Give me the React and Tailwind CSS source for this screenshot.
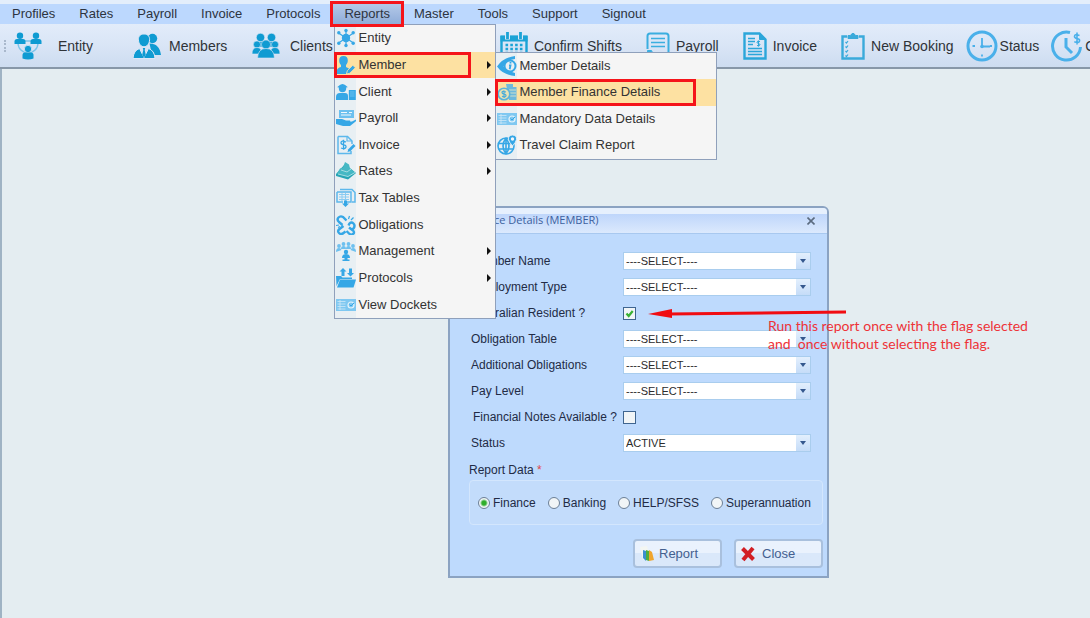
import { useState } from 'react';
import clsx from 'clsx';

/* ---------- Toolbar icons ---------- */

const EntityIcon = () => (
  <svg className="h-7 w-7 shrink-0" viewBox="0 0 28 28" fill="#0f9bd2">
    <path d="M4 11a10 10 0 0 0 20 0M7 9h14" fill="none" stroke="#7cc4ea" strokeWidth="1.400" />
    <circle cx="6" cy="3.800" r="3.200" />
    <path d="M.5 12V9.500Q.5 7 3 7h6q2.500 0 2.500 2.500V12z" />
    <circle cx="22" cy="3.800" r="3.200" />
    <path d="M16.500 12V9.500q0-2.500 2.500-2.500h6q2.500 0 2.500 2.500V12z" />
    <circle cx="14" cy="17" r="3.700" stroke="#dce8f7" strokeWidth=".8" />
    <path d="M8.500 26.500V23q0-2.500 2.500-2.500h6q2.500 0 2.500 2.500v3.500q-5.500 2-11 0z" />
  </svg>
);

const MembersIcon = () => (
  <svg className="h-7 w-7 shrink-0" viewBox="0 0 28 28" fill="#0f9bd2">
    <circle cx="19.500" cy="6.500" r="4.700" />
    <path d="M16.500 11.500q10 0 11.500 11.500h-9z" />
    <g stroke="#dce8f7" strokeWidth="1">
      <path d="M11 2c3.700 0 5.800 2.500 5.600 5.800-.2 3.700-2.500 7-5.600 7s-5.400-3.300-5.600-7C5.200 4.500 7.300 2 11 2z" />
      <path d="M0 26.500q.5-8 6.500-10l4.500 9 4.500-9q6 2 6.500 10z" />
    </g>
    <path d="M9.800 16h2.400l-.5 2 1.100 5-1.800 2.500L9.200 23l1.100-5z" />
  </svg>
);

const ClientsIcon = () => (
  <svg className="h-7 w-7 shrink-0" viewBox="0 0 28 28" fill="#0f9bd2" stroke="#dce8f7" strokeWidth=".6">
    <circle cx="8.500" cy="5.500" r="4.200" />
    <circle cx="19.500" cy="5.500" r="4.200" />
    <path d="M3 15q0-5.500 5.500-5.500T14 15zM14 15q0-5.500 5.500-5.500T25 15z" />
    <circle cx="5" cy="12.500" r="3.600" />
    <circle cx="23" cy="12.500" r="3.600" />
    <path d="M0 22q0-6.500 5-6.500t5 6.500zM18 22q0-6.500 5-6.500t5 6.500z" />
    <circle cx="14" cy="12.500" r="4.500" />
    <path d="M5.500 26q.5-9.500 8.500-9.500t8.500 9.500z" />
  </svg>
);

const CalendarIcon = () => (
  <svg className="h-7 w-7 shrink-0" viewBox="0 0 28 28" fill="none" stroke="#1ba3d6">
    <path d="M1.500 5h25v22h-25z" strokeWidth="2.400" />
    <path d="M.5 6.500h27" strokeWidth="6" />
    <path d="M7.500 0v7.500M20.500 0v7.500" stroke="#dce8f7" strokeWidth="5" />
    <path d="M7.500 0v7M20.500 0v7" strokeWidth="2.800" />
    <path d="M5.500 13h17M5.500 17h17M5.500 21h17M5.500 25h17" strokeWidth="2.600" strokeDasharray="2.600 2.200" />
  </svg>
);

const PayslipIcon = () => (
  <svg className="h-7 w-6 shrink-0" viewBox="0 0 24 28" fill="none" stroke="#3aaee0" strokeWidth="2">
    <path d="M1.500 17V4q0-2.500 2.500-2.500h16q2.500 0 2.500 2.500v17q0 2-2 2h-3" />
    <path d="M5 6.500h14M5 10.500h14M5 14.500h14" strokeWidth="1.600" />
    <path d="M1.500 18.500h4q.5 3 3.500 3h6v3.500H5q-3.500 0-3.500-6.500z" fill="#3aaee0" strokeWidth="1" />
  </svg>
);

const InvoiceIcon = () => (
  <svg className="h-7 w-6 shrink-0" viewBox="0 0 24 28" fill="none" stroke="#2ba6da" strokeWidth="2.400">
    <path d="M1.500 1.500h15l6 6v19h-21z" />
    <path d="M16.500 1.500v6h6z" fill="#2ba6da" strokeWidth="1" />
    <path d="M5 6.500h7M5 9.500h7M5 12.500h5M5 16.500h14M5 19.500h14M5 22.500h14" strokeWidth="1.400" />
    <path d="M17 9.500q-3-1-3 .7 0 1.100 1.500 1.300 1.600.3 1.500 1.400-.2 1.500-3 .6M15.500 8.500v6" strokeWidth="1" />
  </svg>
);

const BookingIcon = () => (
  <svg className="h-7 w-6 shrink-0" viewBox="0 0 24 28" fill="none" stroke="#3aaadb" strokeWidth="2.400">
    <path d="M6 4.500H1.500v22h21v-22H18" />
    <path d="M7 6.500V3.500h2.500Q12-.8 14.500 3.500H17v3z" fill="#3aaadb" strokeWidth="1" />
    <path d="M4.500 10l1 1 1.500-2M4.500 14.500l1 1 1.500-2M4.500 19l1 1 1.500-2M4.500 23.500l1 1 1.500-2" strokeWidth="1.200" />
  </svg>
);

const StatusIcon = () => (
  <svg className="h-8 w-8 shrink-0" viewBox="0 0 32 32" fill="none" stroke="#4ab0ea" strokeWidth="3">
    <circle cx="16" cy="16" r="14" />
    <path d="M16 8v8.500h8" strokeWidth="1.800" />
    <circle cx="16" cy="16.500" r="1.800" fill="#4ab0ea" stroke="none" />
    <path d="M6.500 16H9M16 24.500v2M24 16h2" strokeWidth="1.800" />
  </svg>
);

const OvertimeIcon = () => (
  <svg className="h-8 w-8 shrink-0" viewBox="0 0 32 32" fill="none" stroke="#4ab0ea" strokeWidth="3">
    <path d="M19 2.500A14 14 0 1 0 29.500 17" />
    <path d="M15 8v9l6 6" />
    <path d="M28.500 5.500q-5-2-5 1 0 1.600 2.600 2 2.700.4 2.500 2.300-.4 2.700-5.300 1M26 2.500v12" strokeWidth="1.600" />
  </svg>
);

/* ---------- Menu icons ---------- */

const MenuSvg = ({ children }) => (
  <svg className="h-5 w-5 shrink-0" viewBox="0 0 20 20" fill="#35a7e6" stroke="none">
    {children}
  </svg>
);

const menuIcons = {
  entity: (
    <MenuSvg>
      <circle cx="10" cy="10" r="4.200" />
      <path d="M10 2v16M2.500 5l15 10M2.500 15l15-10" stroke="#35a7e6" strokeWidth="1.200" />
      <circle cx="10" cy="2.500" r="1.700" />
      <circle cx="10" cy="17.500" r="1.700" />
      <circle cx="2.800" cy="4.800" r="1.700" />
      <circle cx="17.200" cy="4.800" r="1.700" />
      <circle cx="2.800" cy="15.200" r="1.700" />
      <circle cx="17.200" cy="15.200" r="1.700" />
    </MenuSvg>
  ),
  member: (
    <MenuSvg>
      <path d="M7.500 1c3 0 4.500 2 4.300 4.700-.1 2-1 3.300-1.800 4.300v2l3 1.500-3 5.500H1v-3.500q0-2.500 4-3.500v-2C4 9 3.300 7.700 3.200 5.700 3 3 4.500 1 7.500 1z" />
      <path d="M10.500 19l.8-3.300 5.500-5.500 2.500 2.500-5.500 5.500z" stroke="#fde3a4" strokeWidth=".8" />
    </MenuSvg>
  ),
  client: (
    <MenuSvg>
      <path d="M2 4.500q4.500-5 9 0l.5 1h-10z" />
      <circle cx="6.500" cy="6.500" r="3.700" />
      <path d="M0 18v-3q0-4 4-4h5q3 0 3 3v4zM12.800 8h7v10h-7z" />
      <path d="M14 10h4.500M14 12h4.500M14 14h4.500" stroke="#79c6f1" strokeWidth=".8" />
    </MenuSvg>
  ),
  payroll: (
    <MenuSvg>
      <path d="M3 2h15v8H3z" fill="#6dc0ef" />
      <path d="M5 4.500h6M5 7h10M13 4.500h3" stroke="#f2f8fc" strokeWidth="1" />
      <path d="M0 11h6l4 1.500h4q1 1.800-1 1.800H9l7-.8 4-2q.5 1.500-1 2.500l-5 4H7l-7-2z" />
    </MenuSvg>
  ),
  invoice: (
    <MenuSvg>
      <path d="M2 1.500h9.500L16 6v3M2 1.500v17h13V16" fill="none" stroke="#5cb8ec" strokeWidth="1.500" />
      <path d="M11 1.500V6h5" fill="none" stroke="#5cb8ec" strokeWidth="1.200" />
      <path d="M10 7Q5 5 5 7.800q0 1.600 2.500 2 2.800.4 2.500 2.200Q9.500 14.500 5 13M7.500 4.800v10" fill="none" stroke="#35a7e6" strokeWidth="1.300" />
      <path d="M11.500 17l.8-2.800L17.500 9l2 2-5.200 5.200z" />
    </MenuSvg>
  ),
  rates: (
    <MenuSvg>
      <path d="M0 13L9 3l11 9-8 6.500L0 15z" fill="#27a5b5" />
      <path d="M9 1l4 2.500 1 4 5 4-7 4-11-3 3-5 3-1z" fill="#45b8c4" />
      <path d="M2 13l10 2.500 7-4M5 9l6 2 4-3" fill="none" stroke="#a5dde2" strokeWidth="1" />
    </MenuSvg>
  ),
  tax: (
    <MenuSvg>
      <path d="M4 1.500h12l3 3V14h-3M1 4h14v10h-4M1 4v10h6" fill="none" stroke="#5cb8ec" strokeWidth="1.500" />
      <path d="M3 6.500h10M3 9h10M3 11.500h10M6 5v8M9.500 5v8" fill="none" stroke="#8accf2" strokeWidth="1" />
      <path d="M8 12.500h3v3h2L9.500 19 6 15.500h2z" />
    </MenuSvg>
  ),
  obligations: (
    <MenuSvg>
      <path
        d="M6.500 10L3 7Q.5 4.500 2.500 2.500T7 2l3.500 3.500M12.500 10.500l1-2q2-2 4 0t0 5l-1.500 1M13 12.500l4 3q2 2 0 3.500t-4-.5L10.500 16M7.500 11l-4 3q-2.500 2-.5 4t4.500 0l2-1.500"
        fill="none"
        stroke="#35a7e6"
        strokeWidth="2.400"
      />
      <path d="M13.500 1l-1 3M17.500 2.500L15 5M0 10.500l3-.5M2 12.500l2-1" stroke="#35a7e6" strokeWidth="1.200" />
    </MenuSvg>
  ),
  management: (
    <MenuSvg>
      <g fill="#6dc0ef">
        <circle cx="3" cy="5" r="1.900" />
        <circle cx="7.500" cy="3" r="1.900" />
        <circle cx="12.500" cy="3" r="1.900" />
        <circle cx="17" cy="5" r="1.900" />
        <path d="M0 11q0-4 3-4 2 0 2.500 2zM5 8q0-3 2.500-3T10 8zM10 8q0-3 2.500-3T15 8zM14.500 9q.5-2 2.500-2 3 0 3 4z" />
      </g>
      <circle cx="10" cy="11" r="2.200" />
      <path d="M6 17q0-4 4-4t4 4zM8.500 16h3v2.500h2V20h-7v-1.500h2z" />
    </MenuSvg>
  ),
  protocols: (
    <MenuSvg>
      <path d="M0 8h5l1.500 1.500H16V11H4L.5 18z" />
      <path d="M4 11.500h16L17.500 19.500H1z" />
      <path d="M7 0l3.500 3.500H8.500V8h-3V3.500h-2zM14.500 8.500L11 5h2V.5h3V5h2z" />
    </MenuSvg>
  ),
  dockets: (
    <MenuSvg>
      <path d="M0 4h20v12H0z" fill="#7fc8f1" />
      <path d="M1.500 6.500h8M1.500 9h8M1.500 11.500h8M1.500 14h8M4 5v10" stroke="#cfe9f8" strokeWidth=".8" />
      <circle cx="15" cy="10" r="3" fill="none" stroke="#e4f3fb" strokeWidth="1.200" />
      <path d="M13.500 9.500l1.500 1.500 3-3" fill="none" stroke="#35a7e6" strokeWidth="1" />
    </MenuSvg>
  ),
  details: (
    <MenuSvg>
      <path d="M0 10.500Q6 1.500 18 0v3Q10 4 6.500 10.500 10 15 18 17v3Q6 19 0 10.500z" />
      <circle cx="13" cy="10" r="5.500" fill="none" stroke="#35a7e6" strokeWidth="2" />
      <path d="M13.500 6v1.500M12 9.300h1.500l-.8 4" fill="none" stroke="#35a7e6" strokeWidth="1.800" />
    </MenuSvg>
  ),
  finance: (
    <MenuSvg>
      <path d="M9 2h7v3h3.500v13H12z" fill="#6db9dd" />
      <path d="M12 8h7M13 11h6M13 14h6" stroke="#d9e5c8" strokeWidth=".9" />
      <circle cx="7" cy="12" r="5.800" fill="#e8e2b4" stroke="#5bb3d9" strokeWidth="1.600" />
      <path d="M9 10Q5 8.500 5 10.600q0 1.300 2 1.500 2.200.3 2 1.700Q8.500 15.500 5 14.400M7 8.500v7.500" fill="none" stroke="#4bacd8" strokeWidth="1.200" />
    </MenuSvg>
  ),
  travel: (
    <MenuSvg>
      <g fill="none" stroke="#35a7e6" strokeWidth="1.600">
        <circle cx="9" cy="11" r="8" />
        <path d="M9 3v16M1.500 8.500H14M1.500 14h15M9 3Q3 11 9 19M9 3q6 8 0 16" />
      </g>
      <path d="M15.500 0Q20 .3 19.500 4.500 19 7 15.500 11 12 7 11.500 4.500 11 .3 15.500 0z" stroke="#f4f6f8" strokeWidth=".8" />
      <circle cx="15.500" cy="4" r="1.700" fill="#f4f6f8" />
    </MenuSvg>
  ),
};

/* ---------- Data ---------- */

const menuBar = ['Profiles', 'Rates', 'Payroll', 'Invoice', 'Protocols', 'Reports', 'Master', 'Tools', 'Support', 'Signout'];

const reportItems = [
  { label: 'Entity', icon: 'entity' },
  { label: 'Member', icon: 'member', sub: true },
  { label: 'Client', icon: 'client', sub: true },
  { label: 'Payroll', icon: 'payroll', sub: true },
  { label: 'Invoice', icon: 'invoice', sub: true },
  { label: 'Rates', icon: 'rates', sub: true },
  { label: 'Tax Tables', icon: 'tax' },
  { label: 'Obligations', icon: 'obligations' },
  { label: 'Management', icon: 'management', sub: true },
  { label: 'Protocols', icon: 'protocols', sub: true },
  { label: 'View Dockets', icon: 'dockets' },
];

const memberItems = [
  { label: 'Member Details', icon: 'details' },
  { label: 'Member Finance Details', icon: 'finance' },
  { label: 'Mandatory Data Details', icon: 'dockets' },
  { label: 'Travel Claim Report', icon: 'travel' },
];

const recordTools = [
  { label: 'Entity', Icon: EntityIcon, gap: 'gap-4' },
  { label: 'Members', Icon: MembersIcon, gap: 'gap-2' },
  { label: 'Clients', Icon: ClientsIcon, gap: 'gap-2.5' },
];

const shiftTools = [
  { label: 'Confirm Shifts', Icon: CalendarIcon, space: 'mr-6' },
  { label: 'Payroll', Icon: PayslipIcon, space: 'mr-6' },
  { label: 'Invoice', Icon: InvoiceIcon, space: 'mr-6' },
  { label: 'New Booking', Icon: BookingIcon, space: 'mr-3' },
];

const clockTools = [
  { label: 'Status', Icon: StatusIcon },
  { label: 'C', Icon: OvertimeIcon },
];

const fields = [
  { id: 'memberName', label: 'Member Name', type: 'select', value: '----SELECT----' },
  { id: 'employmentType', label: 'Employment Type', type: 'select', value: '----SELECT----' },
  { id: 'resident', label: 'Australian Resident ?', type: 'check' },
  { id: 'obligationTable', label: 'Obligation Table', type: 'select', value: '----SELECT----' },
  { id: 'additional', label: 'Additional Obligations', type: 'select', value: '----SELECT----' },
  { id: 'payLevel', label: 'Pay Level', type: 'select', value: '----SELECT----' },
  { id: 'notes', label: 'Financial Notes Available ?', type: 'check' },
  { id: 'status', label: 'Status', type: 'select', value: 'ACTIVE' },
];

const reportTypes = ['Finance', 'Banking', 'HELP/SFSS', 'Superannuation'];

/* ---------- Components ---------- */

const MenuRow = ({ item, active, children }) => (
  <li className="relative flex">
    <button
      type="button"
      className={clsx(
        'flex flex-1 items-center gap-0.5 pl-px text-left text-[13px] leading-4 text-[#333]',
        active && 'bg-[#fde1a2]'
      )}
    >
      {menuIcons[item.icon]}
      <span className="flex-1 whitespace-nowrap">{item.label}</span>
      {item.sub && (
        <svg className="mr-1 h-2 w-1" viewBox="0 0 4 8">
          <path d="M0 0l4 4-4 4z" fill="#111" />
        </svg>
      )}
    </button>
    {children}
  </li>
);

const menuPanel =
  'absolute border border-[#8fa0bb] bg-[linear-gradient(to_right,#e8eff3_21px,#f5f5f5_21px)]';

const ReportsMenu = () => (
  <ul className={clsx(menuPanel, 'left-0.5 top-full grid h-[295px] w-[162px] auto-rows-fr')}>
    {reportItems.map((item) => (
      <MenuRow key={item.label} item={item} active={item.label === 'Member'}>
        {item.label === 'Member' && (
          <>
            <span className="pointer-events-none absolute inset-y-0 -left-px right-6 border-[3px] border-[#f5141a]" />
            <MemberMenu />
          </>
        )}
      </MenuRow>
    ))}
  </ul>
);

const MemberMenu = () => (
  <ul className={clsx(menuPanel, 'left-full top-0 z-10 grid h-[108px] w-[222px] auto-rows-fr')}>
    {memberItems.map((item) => (
      <MenuRow key={item.label} item={item} active={item.icon === 'finance'}>
        {item.icon === 'finance' && (
          <span className="pointer-events-none absolute inset-y-0 -left-px right-5 border-[3px] border-[#f5141a]" />
        )}
      </MenuRow>
    ))}
  </ul>
);

const MenuBar = () => (
  <nav className="relative z-20 flex border-t-4 border-[#e3eefb] bg-[#bcd8fe] text-[13px] leading-5 text-[#2d3440]">
    {menuBar.map((name) => (
      <div key={name} className="relative">
        <button
          type="button"
          className={clsx(
            'h-5 px-3',
            name === 'Reports' && 'bg-linear-to-b from-[#b4c9e8] to-[#8facd8]'
          )}
        >
          {name}
        </button>
        {name === 'Reports' && (
          <>
            <ReportsMenu />
            <span className="pointer-events-none absolute -inset-x-0.5 -inset-y-[3px] border-[3px] border-[#f5141a]" />
          </>
        )}
      </div>
    ))}
  </nav>
);

const Toolbar = () => (
  <div className="flex h-[45px] items-center overflow-hidden border-b-2 border-[#8797a8] bg-linear-to-b from-[#e2ecfa] via-[#d9e5f6] to-[#cddcf0] pl-1 text-sm text-[#2f3338]">
    <span className="mr-2 h-3 border-l-2 border-dotted border-[#a9b8cc]" />
    <div className="flex w-[486px] shrink-0">
      {recordTools.map(({ label, Icon, gap }) => (
        <button key={label} type="button" className={clsx('flex w-[119px] shrink-0 items-center', gap)}>
          <Icon />
          {label}
        </button>
      ))}
    </div>
    {shiftTools.map(({ label, Icon, space }) => (
      <button key={label} type="button" className={clsx('flex shrink-0 items-center gap-1.5 whitespace-nowrap', space)}>
        <Icon />
        {label}
      </button>
    ))}
    {clockTools.map(({ label, Icon }) => (
      <button key={label} type="button" className="mr-3 flex shrink-0 items-center gap-0.5">
        <Icon />
        {label}
      </button>
    ))}
  </div>
);

const SelectBox = ({ id, value }) => (
  <div className="relative flex-1">
    <select
      id={id}
      className="block h-[18px] w-full appearance-none border border-[#a9cdee] bg-white pl-0.5 text-[11px] leading-4 text-[#2b2b2b]"
    >
      <option>{value}</option>
    </select>
    <span className="pointer-events-none absolute inset-y-px right-px flex w-3.5 items-center justify-center bg-linear-to-b from-[#e3effd] to-[#c5dcf8]">
      <svg className="h-1 w-1.5" viewBox="0 0 6 4">
        <path d="M0 0h6L3 4z" fill="#35588e" />
      </svg>
    </span>
  </div>
);

const CheckBox = ({ id, checked, onChange }) => (
  <span className="relative flex">
    <input
      id={id}
      type="checkbox"
      checked={checked}
      onChange={onChange}
      className="h-[13px] w-[13px] appearance-none border border-[#3f6590] bg-[#f1f5f7]"
    />
    {checked && (
      <svg className="pointer-events-none absolute inset-0 h-[13px] w-[13px]" viewBox="0 0 13 13">
        <path d="M3.500 6.500l2.200 2.500 4-5" fill="none" stroke="#3bb133" strokeWidth="2.200" />
      </svg>
    )}
  </span>
);

const dialogButton =
  'flex h-[29px] w-[89px] items-center rounded-sm border-2 border-[#a9c0dd] bg-linear-to-b from-[#eaf2fd] from-50% to-[#dae8fa] to-50% pl-1';

const FinanceDialog = () => {
  const [checks, setChecks] = useState({ resident: true, notes: false });
  const [reportType, setReportType] = useState('Finance');

  const toggle = (id) => setChecks({ ...checks, [id]: !checks[id] });

  return (
    <section className="absolute left-[448px] top-[137px] w-[381px] rounded-t-md border-2 border-[#8ba3c2] bg-[#bedafd]">
      <header className="flex h-[26px] items-center justify-between rounded-t border-b border-[#a8c8ef] bg-[linear-gradient(to_bottom,#e6f0fd_6px,#bfd6fb_6px,#dbe9fd)] pl-4 pr-3">
        <h2 className="font-['Open_Sans',sans-serif] text-[11px] text-[#3c5f9e]">Finance Details (MEMBER)</h2>
        <button type="button" aria-label="Close window">
          <svg className="h-2 w-2" viewBox="0 0 8 8">
            <path d="M.5.5l7 7M7.500.5l-7 7" stroke="#5b6b80" strokeWidth="1.600" />
          </svg>
        </button>
      </header>

      <form className="pb-2 pl-[21px] pr-1 pt-3.5 text-xs text-[#222b45]" onSubmit={(e) => e.preventDefault()}>
        <div className="pr-3">
          {fields.map((field) => (
            <div key={field.id} className="flex h-[26px] items-center">
              <label
                htmlFor={field.id}
                className={clsx('w-[152px] shrink-0 whitespace-nowrap', field.id === 'notes' && 'pl-0.5')}
              >
                {field.label}
              </label>
              {field.type === 'select' ? (
                <SelectBox id={field.id} value={field.value} />
              ) : (
                <CheckBox id={field.id} checked={checks[field.id]} onChange={() => toggle(field.id)} />
              )}
            </div>
          ))}
        </div>

        <fieldset className="-ml-0.5 mt-1">
          <legend className="leading-5">
            Report Data <span className="text-[#e0474c]">*</span>
          </legend>
          <div className="flex h-[45px] items-center gap-3 rounded-sm border border-[#d3e6fd] bg-[#c3dcfb] pl-2">
            {reportTypes.map((type) => (
              <label key={type} className="flex items-center gap-[3px]">
                <input
                  type="radio"
                  name="reportType"
                  checked={reportType === type}
                  onChange={() => setReportType(type)}
                  className="h-3 w-3 appearance-none rounded-full border border-[#6b7f96] bg-[#f1f5f7] checked:bg-[radial-gradient(circle,#2fae2b_2px,#f1f5f7_4px)]"
                />
                {type}
              </label>
            ))}
          </div>
        </fieldset>

        <div className="mt-3.5 flex justify-end gap-3 text-[13px] text-[#44608f]">
          <button type="button" className={clsx(dialogButton, 'gap-1')}>
            <svg className="h-4 w-4" viewBox="0 0 16 16">
              <path d="M1 1l7-1 3 12-7 2z" fill="#f3f6f2" />
              <path d="M4 4l3 1v10l-3-3z" fill="#3b8fd0" />
              <path d="M7 4l3 1v10l-3-1z" fill="#4fae3f" />
              <path d="M10 4l3 2 2 8-5 1z" fill="#f0a52c" />
            </svg>
            Report
          </button>
          <button type="button" className={clsx(dialogButton, 'gap-1.5')}>
            <svg className="h-4 w-4" viewBox="0 0 16 16">
              <path d="M2.500 2.500l11 11M13 2L3 14" stroke="#d21f24" strokeWidth="4" />
            </svg>
            Close
          </button>
        </div>
      </form>
    </section>
  );
};

const Note = () => (
  <>
    <svg className="absolute left-[648px] top-[238px] h-3 w-[200px]" viewBox="0 0 200 12">
      <path d="M20 7L198 5" stroke="#f10d12" strokeWidth="3" />
      <path d="M0 7l24-5v9z" fill="#f10d12" />
    </svg>
    <p className="absolute left-[768px] top-[248px] whitespace-pre font-['Lato',sans-serif] text-sm leading-[18px] text-[#ee3338]">
      {'Run this report once with the flag selected\nand  once without selecting the flag.'}
    </p>
  </>
);

const App = () => (
  <div className="flex min-h-screen flex-col overflow-hidden bg-[#e4edf1] font-['Liberation_Sans',Arial,sans-serif]">
    <MenuBar />
    <Toolbar />
    <main className="relative flex-1 border-l-2 border-[#9fb3c4]">
      <div className="absolute inset-y-0 -left-0.5">
        <FinanceDialog />
        <Note />
      </div>
    </main>
  </div>
);

export default App;
